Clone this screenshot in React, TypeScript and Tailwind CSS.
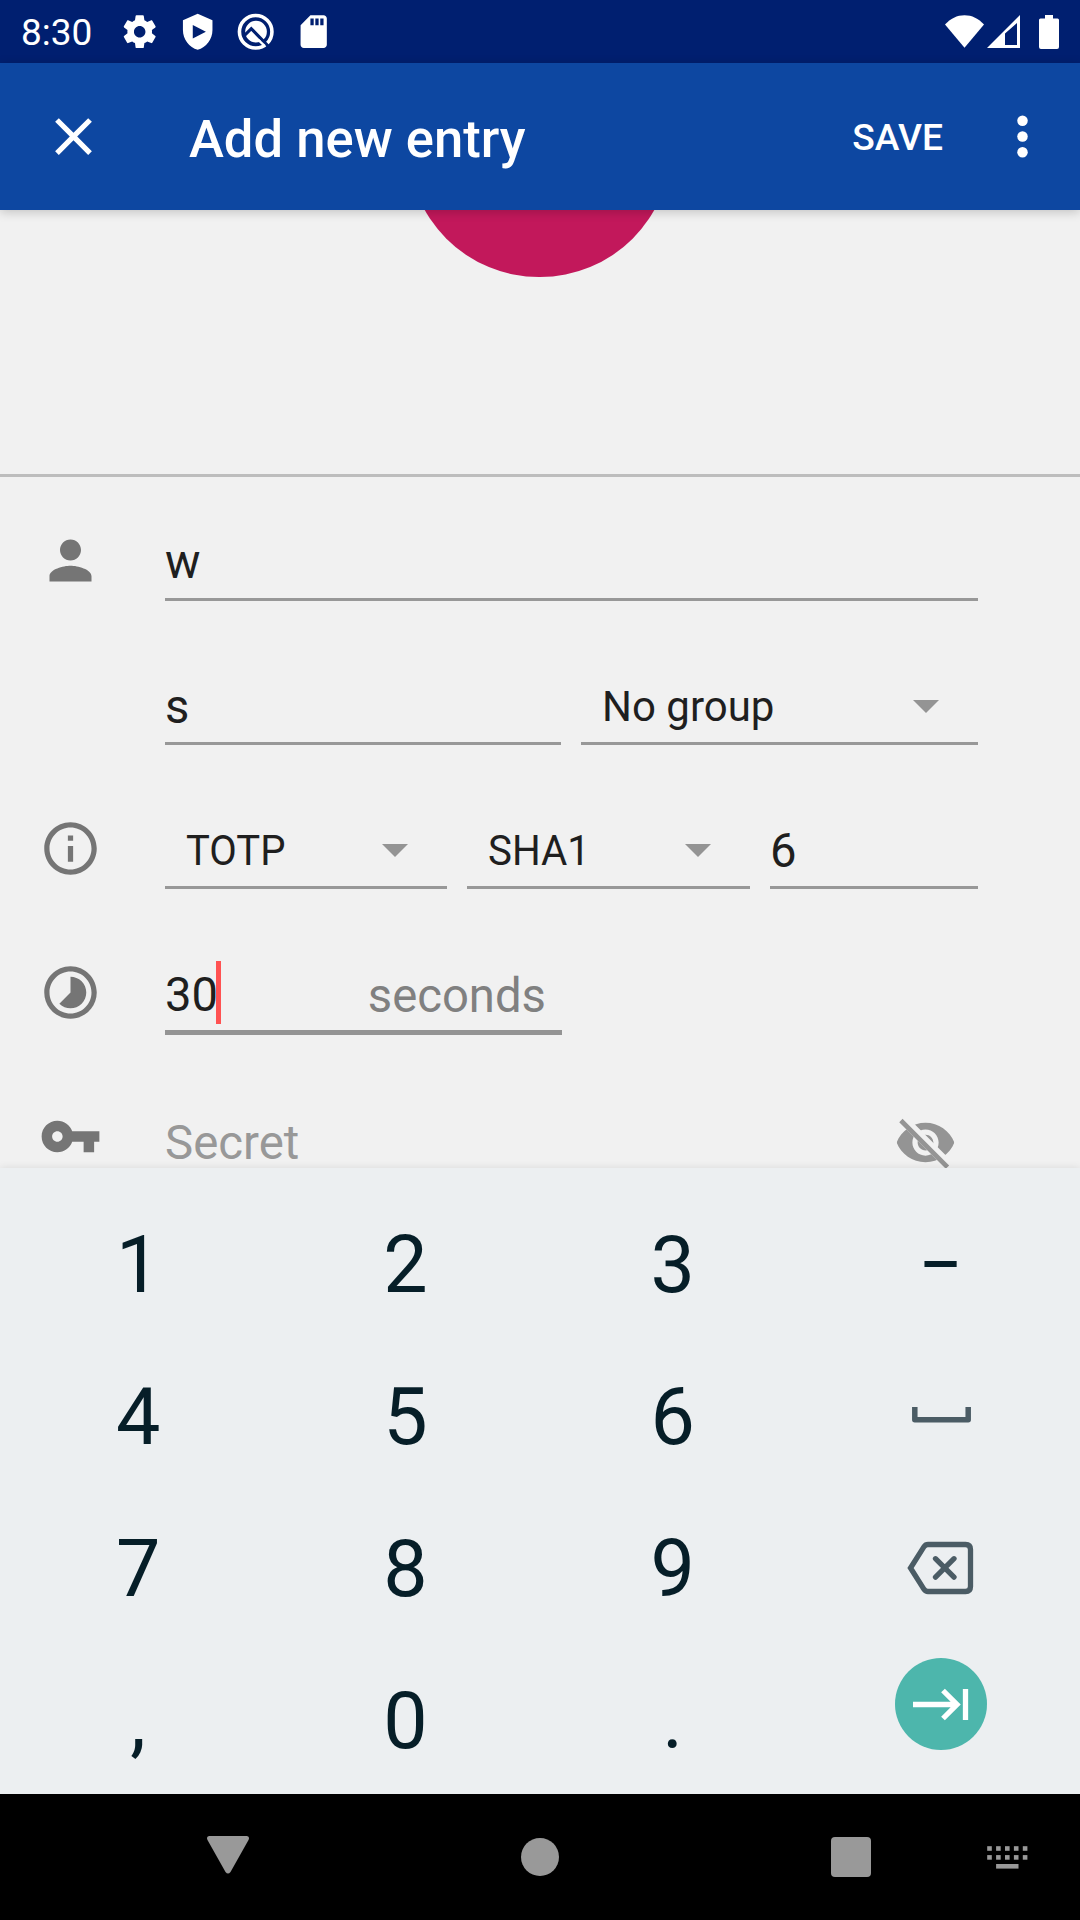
import React from "react";

type BoxProps = { className?: string; children?: React.ReactNode };

function Icon({ className = "", children }: BoxProps) {
  return (
    <svg viewBox="0 0 24 24" className={`shrink-0 ${className}`} fill="currentColor">
      {children}
    </svg>
  );
}

function StatusBar() {
  return (
    <div className="flex h-[63px] shrink-0 items-center bg-[#001f70] text-white">
      <span className="mt-[2px] ml-[21px] w-[99px] text-[37px] leading-[63px]">8:30</span>
      <Icon className="h-[39.4px] w-[39.4px]">
        <path d="M19.43 12.98c.04-.32.07-.64.07-.98s-.03-.66-.07-.98l2.11-1.65c.19-.15.24-.42.12-.64l-2-3.46c-.12-.22-.39-.3-.61-.22l-2.49 1c-.52-.4-1.08-.73-1.69-.98l-.38-2.65C14.46 2.18 14.25 2 14 2h-4c-.25 0-.46.18-.49.42l-.38 2.65c-.61.25-1.17.59-1.69.98l-2.49-1c-.23-.09-.49 0-.61.22l-2 3.46c-.13.22-.07.49.12.64l2.11 1.65c-.04.32-.07.65-.07.98s.03.66.07.98l-2.11 1.65c-.19.15-.24.42-.12.64l2 3.46c.12.22.39.3.61.22l2.49-1c.52.4 1.08.73 1.69.98l.38 2.65c.03.24.24.42.49.42h4c.25 0 .46-.18.49-.42l.38-2.65c.61-.25 1.17-.59 1.69-.98l2.49 1c.23.09.49 0 .61-.22l2-3.46c.12-.22.07-.49-.12-.64l-2.11-1.65zM12 15.5c-1.93 0-3.5-1.57-3.5-3.5s1.57-3.5 3.5-3.5 3.5 1.57 3.5 3.5-1.57 3.5-3.5 3.5z" />
      </Icon>
      <Icon className="ml-[18.6px] h-[39.4px] w-[39.4px]">
        <path
          fillRule="evenodd"
          d="M12 1 3 5v6c0 5.55 3.84 10.74 9 12 5.16-1.26 9-6.45 9-12V5l-9-4zM9 7.9l8 4.1-8 4.1z"
        />
      </Icon>
      <Icon className="ml-[18.6px] h-[39.4px] w-[39.4px]">
        <circle cx="12" cy="12" r="9.9" fill="none" stroke="currentColor" strokeWidth="2.2" />
        <circle cx="12.2" cy="12" r="6.6" />
        <path d="M5.2 14.2 9.3 10.2 20.2 21.4" fill="none" stroke="#001f70" strokeWidth="1.9" />
        <path d="m13.400 16.800 4.200 4" fill="none" stroke="currentColor" strokeWidth="1.4" />
      </Icon>
      <Icon className="ml-[18.6px] h-[39.4px] w-[39.4px]">
        <path d="M18 2h-8L4.02 8 4 20c0 1.1.9 2 2 2h12c1.1 0 2-.9 2-2V4c0-1.1-.9-2-2-2zm-6 6h-2V4h2v4zm3 0h-2V4h2v4zm3 0h-2V4h2v4z" />
      </Icon>
      <svg viewBox="0 0 39 33" className="ml-auto h-[33px] w-[39px]" fill="currentColor">
        <path d="M0 9.5C5.5 3.5 12 .2 19.5.2S33.500 3.500 39 9.500L19.500 32.800z" />
      </svg>
      <svg viewBox="0 0 33 33" className="ml-[3px] h-[33px] w-[33px]" fill="currentColor">
        <path fillRule="evenodd" d="M0 33 33 0v33zM18 18.500v11.500h12V8z" />
      </svg>
      <svg viewBox="0 0 20 34" className="mr-[21px] ml-[19px] h-[34px] w-5" fill="currentColor">
        <path d="M6 0h8v3.500h4.500q1.500 0 1.500 1.500v27q0 2-2 2H2q-2 0-2-2V5q0-1.500 1.500-1.500H6z" />
      </svg>
    </div>
  );
}

function Toolbar() {
  return (
    <div className="relative z-10 flex h-[147px] shrink-0 items-center bg-[#0d47a1] text-white shadow-[0_2px_10px_rgba(0,0,0,0.2)]">
      <Icon className="ml-[42px] h-[63px] w-[63px]">
        <path d="M19 6.410 17.590 5 12 10.590 6.410 5 5 6.410 10.590 12 5 17.590 6.410 19 12 13.410 17.590 19 19 17.590 13.410 12z" />
      </Icon>
      <h1 className="mt-[5px] ml-[84px] text-[52.6px] leading-[63px] font-medium">Add new entry</h1>
      <button className="mt-[2px] mr-[48px] ml-auto text-[37.200px] font-medium">SAVE</button>
      <Icon className="mr-[26px] h-[63px] w-[63px]">
        <circle cx="12" cy="6" r="2" />
        <circle cx="12" cy="12" r="2" />
        <circle cx="12" cy="18" r="2" />
      </Icon>
    </div>
  );
}

function Row({ icon, className = "", children }: BoxProps & { icon?: React.ReactNode }) {
  return (
    <div className={`flex shrink-0 items-end ${className}`}>
      <div className="mb-[9.500px] flex w-[165px] shrink-0 pl-[39px] text-[#757575]">{icon}</div>
      {children}
    </div>
  );
}

function Field({ className = "", children }: BoxProps) {
  return (
    <div
      className={`flex h-20 items-center border-b-[3px] border-[#989898] text-[47.25px] leading-none ${className}`}
    >
      {children}
    </div>
  );
}

function Spinner({
  label,
  className = "",
  labelClassName = "",
}: {
  label: string;
  className?: string;
  labelClassName?: string;
}) {
  return (
    <div
      className={`flex h-20 items-center justify-between border-b-[3px] border-[#989898] pt-[7px] pr-[39.500px] pl-[21px] text-[42px] leading-none ${className}`}
    >
      <span className={labelClassName}>{label}</span>
      <svg viewBox="0 0 26 13" className="mb-[2px] h-[13px] w-[26px]" fill="#949494">
        <path d="M0 0h26L13 13z" />
      </svg>
    </div>
  );
}

function EntryForm() {
  return (
    <div className="flex h-[958px] shrink-0 flex-col overflow-hidden bg-[#f1f1f1] text-[#1f1f1f]">
      <div className="flex h-[267px] shrink-0 justify-center border-b-[3px] border-[#bdbdbd]">
        <div className="-mt-[195.500px] mr-px h-[262.500px] w-[262.500px] rounded-full bg-[#c2185b]" />
      </div>

      <Row
        className="h-[124px]"
        icon={
          <Icon className="h-[63px] w-[63px]">
            <path d="M12 12c2.210 0 4-1.790 4-4s-1.790-4-4-4-4 1.790-4 4 1.790 4 4 4zm0 2c-2.670 0-8 1.340-8 4v2h16v-2c0-2.660-5.330-4-8-4z" />
          </Icon>
        }
      >
        <Field className="w-[813px] pt-[7px]">w</Field>
      </Row>

      <Row className="h-36">
        <Field className="w-[396px] pt-[9px]">s</Field>
        <Spinner label="No group" className="ml-5 w-[397px]" />
      </Row>

      <Row
        className="h-36"
        icon={
          <Icon className="h-[63px] w-[63px]">
            <path d="M11 17h2v-6h-2v6zm1-15C6.480 2 2 6.480 2 12s4.480 10 10 10 10-4.480 10-10S17.520 2 12 2zm0 18c-4.410 0-8-3.590-8-8s3.590-8 8-8 8 3.590 8 8-3.590 8-8 8zM11 9h2V7h-2v2z" />
          </Icon>
        }
      >
        <Spinner label="TOTP" className="w-[282px]" labelClassName="origin-left scale-x-[0.953]" />
        <Spinner label="SHA1" className="ml-5 w-[283px]" labelClassName="origin-left scale-x-[0.96]" />
        <Field className="ml-5 w-[208px] pt-[9px]">6</Field>
      </Row>

      <Row
        className="h-[146px]"
        icon={
          <Icon className="mb-[2px] h-[63px] w-[63px]">
            <path d="M16.240 7.760C15.070 6.590 13.540 6 12 6v6l-4.240 4.240c2.340 2.340 6.140 2.340 8.490 0 2.340-2.340 2.340-6.140-.01-8.480zM12 2C6.480 2 2 6.480 2 12s4.480 10 10 10 10-4.480 10-10S17.520 2 12 2zm0 18c-4.420 0-8-3.580-8-8s3.580-8 8-8 8 3.580 8 8-3.580 8-8 8z" />
          </Icon>
        }
      >
        <div className="flex h-[82px] w-[397px] items-center border-b-[5px] border-[#949494] pt-[2px] text-[47.25px] leading-none">
          <span className="pt-[6px]">30</span>
          <span className="-ml-[2px] h-[63px] w-[5px] bg-[#ff5252]" />
          <span className="mr-[16px] ml-auto pt-[9px] text-[#808080]">seconds</span>
        </div>
      </Row>

      <div className="flex h-[133px] shrink-0 items-start">
        <div className="w-[165px] shrink-0 pt-[70px] pl-[39px] text-[#757575]">
          <Icon className="h-[63px] w-[63px]">
            <path d="M12.650 10C11.830 7.670 9.610 6 7 6c-3.310 0-6 2.690-6 6s2.690 6 6 6c2.610 0 4.830-1.670 5.650-4H17v4h4v-4h2v-4H12.650zM7 14c-1.100 0-2-.9-2-2s.9-2 2-2 2 .9 2 2-.9 2-2 2z" />
          </Icon>
        </div>
        <span className="pt-[85px] text-[47.4px] leading-[47px] text-[#989898]">Secret</span>
        <Icon className="mt-[76px] mr-[123px] ml-auto h-[63px] w-[63px] text-[#949494]">
          <clipPath id="eye-cut">
            <path d="M2 4.270 19.730 22 22.270 19.460 4.540 1.730V1H23v22H1V4.270z" />
          </clipPath>
          <path
            clipPath="url(#eye-cut)"
            d="M12 4.500C7 4.500 2.730 7.610 1 12c1.730 4.390 6 7.500 11 7.500s9.270-3.110 11-7.500c-1.730-4.390-6-7.500-11-7.500zM12 17c-2.760 0-5-2.240-5-5s2.240-5 5-5 5 2.240 5 5-2.240 5-5 5zm0-8c-1.660 0-3 1.340-3 3s1.340 3 3 3 3-1.340 3-3-1.340-3-3-3z"
          />
          <path
            d="M3.270 4.270 19.740 20.740"
            fill="none"
            stroke="currentColor"
            strokeWidth="1.8"
            strokeLinecap="square"
          />
        </Icon>
      </div>
    </div>
  );
}

function Key({ className = "", children }: BoxProps) {
  return <button className={`flex h-[152px] items-center justify-center ${className}`}>{children}</button>;
}

function Keypad() {
  return (
    <div className="relative z-10 grid h-[626px] shrink-0 grid-cols-4 content-start bg-[#eceff1] pt-[21px] pr-[6.500px] pl-[4.500px] text-[79px] leading-none text-[#061e28] shadow-[0_0_8px_rgba(0,0,0,0.1)]">
      <Key>1</Key>
      <Key>2</Key>
      <Key>3</Key>
      <Key className="pl-px">−</Key>
      <Key>4</Key>
      <Key>5</Key>
      <Key>6</Key>
      <Key>
        <svg viewBox="0 0 59 16" className="mt-[-4px] ml-[3.500px] h-4 w-[59px]" fill="none" stroke="#4b5c65" strokeWidth="5.500">
          <path d="M2.800 0v12.800h53.400V0" strokeLinejoin="round" />
        </svg>
      </Key>
      <Key>7</Key>
      <Key>8</Key>
      <Key>9</Key>
      <Key>
        <svg viewBox="0 0 68 54" className="mb-[3px] ml-[2.500px] h-[54px] w-[68px]" fill="none" stroke="#4b5c65" strokeWidth="5.300">
          <path d="M21 3.500h37.500q5 0 5 5v37q0 5-5 5H21q-2.500 0-4-2.200L3.500 27 17 5.700q1.500-2.200 4-2.200z" />
          <path d="m28.500 17.700 18.500 18.500m0-18.500L28.500 36.200" strokeLinecap="round" />
        </svg>
      </Key>
      <Key>,</Key>
      <Key>0</Key>
      <Key>.</Key>
      <Key>
        <span className="mb-[34px] ml-[3px] flex h-[92px] w-[92px] items-center justify-center rounded-full bg-[#4db6ac]">
          <svg viewBox="0 0 92 92" className="h-[92px] w-[92px]" fill="none" stroke="white" strokeWidth="5.300">
            <path d="M18 46.500h42M48 32.500l14 14-14 14M70.500 31v31" />
          </svg>
        </span>
      </Key>
    </div>
  );
}

function NavBar() {
  return (
    <div className="flex h-[126px] shrink-0 items-center bg-black text-[#999999]">
      <svg viewBox="0 0 42 38" className="mb-[5px] ml-[207px] h-[38px] w-[42px]" fill="currentColor">
        <path d="M2 0h38q3 .5 1.500 4L23.500 36q-2.500 3-5 0L.5 4Q-1 .5 2 0z" />
      </svg>
      <div className="ml-[271.500px] h-[38.500px] w-[38.500px] rounded-full bg-current" />
      <div className="ml-[272px] h-[40px] w-[40px] rounded-[4px] bg-current" />
      <svg viewBox="0 0 41 23" className="ml-[116px] h-[23px] w-[41px]" fill="currentColor">
        {[0, 1, 2, 3, 4].map((i) => (
          <React.Fragment key={i}>
            <rect x={0.2 + i * 8.9} y="0.2" width="4.600" height="4.600" />
            <rect x={0.2 + i * 8.9} y="9.1" width="4.600" height="4.600" />
          </React.Fragment>
        ))}
        <rect x="9.100" y="18" width="22.400" height="4.600" />
      </svg>
    </div>
  );
}

export default function App() {
  return (
    <div className="flex h-[1920px] w-[1080px] flex-col overflow-hidden bg-black font-['Roboto',sans-serif]">
      <StatusBar />
      <Toolbar />
      <EntryForm />
      <Keypad />
      <NavBar />
    </div>
  );
}
